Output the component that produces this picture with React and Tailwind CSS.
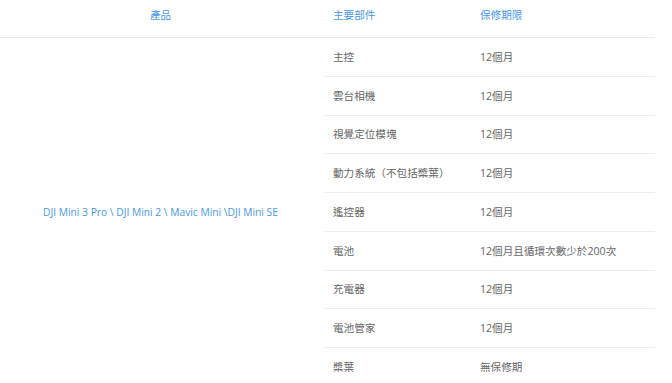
import React from "react";

const rows = [
  ["主控", "12個月"],
  ["雲台相機", "12個月"],
  ["視覺定位模塊", "12個月"],
  ["動力系統（不包括槳葉）", "12個月"],
  ["遙控器", "12個月"],
  ["電池", "12個月且循環次數少於200次"],
  ["充電器", "12個月"],
  ["電池管家", "12個月"],
  ["槳葉", "無保修期"],
];

export default function App() {
  return (
    <div
      className="w-[672px] h-[383px] overflow-hidden bg-white text-[10.6px]"
      style={{ fontFamily: '"Open Sans", "Noto Sans CJK TC", sans-serif' }}
    >
      <div className="w-[655px]">
        <div className="flex h-[38px] border-b border-[#e9e9e9] text-[#4b97e3] leading-[16px] pt-[7px]">
          <div className="w-[325px] text-center pr-1">產品</div>
          <div className="w-[147px] pl-2">主要部件</div>
          <div className="flex-1 pl-2">保修期限</div>
        </div>
        <div className="flex">
          <div className="w-[325px] flex items-center justify-center pr-1 text-[#4b97e3] text-[10.25px]">
            DJI Mini 3 Pro \ DJI Mini 2 \ Mavic Mini \DJI Mini SE
          </div>
          <div className="flex-1 flex flex-col">
            {rows.map(([a, b], i) => (
              <div
                key={i}
                className="flex items-center h-[38.75px] border-b border-[#ececec] text-[#666666] leading-[16px]"
              >
                <div className="w-[147px] pl-2">{a}</div>
                <div className="flex-1 pl-2">{b}</div>
              </div>
            ))}
          </div>
        </div>
      </div>
    </div>
  );
}
